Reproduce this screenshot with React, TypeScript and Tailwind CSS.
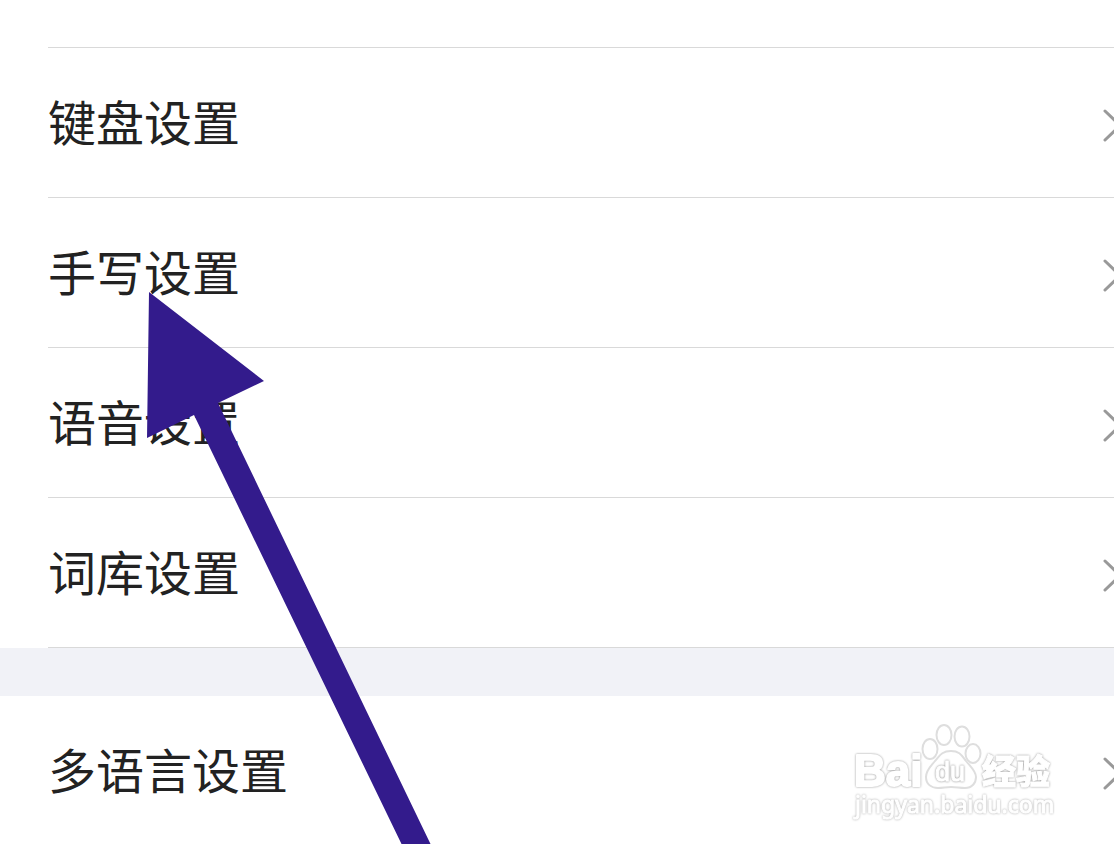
const groups = [
    ['键盘设置', '手写设置', '语音设置', '词库设置'],
    ['多语言设置'],
];

function Chevron() {
    return (
        <svg className="mt-1 -mr-2 h-[38px] w-5 shrink-0" viewBox="0 0 20 38" fill="none" stroke="#999" strokeWidth="3" strokeLinecap="round" aria-hidden="true">
            <path d="M3 5 18 19.5 3 34" />
        </svg>
    )
}

function SettingRow({ label }: { label: string }) {
    return (
        <li className="ml-12 border-b border-[#d9d9d9]">
            <button type="button" className="flex h-[149px] w-full items-center justify-between overflow-hidden text-left">
                <span className="pb-1.5 text-[48px] leading-[70px]">{label}</span>
                <Chevron />
            </button>
        </li>
    )
}

function Pointer() {
    return (
        <svg className="pointer-events-none absolute top-[292px] left-[147px] h-[552px] w-[284px]" viewBox="147 292 284 552" aria-hidden="true">
            <path d="M149 292 264 381 218 403 431 845 402 845 194 415 147 438Z" fill="#331b8c" />
        </svg>
    )
}

function Watermark() {
    return (
        <svg className="pointer-events-none absolute top-[720px] right-[54px] h-[104px] w-[210px]" viewBox="850 720 210 104" fill="#fff" stroke="#fff" strokeWidth="2" strokeLinejoin="round">
            <g className="[filter:drop-shadow(0_0_1px_#999)]">
                <text x="854" y="786" fontFamily="Liberation Sans" fontWeight="700" fontSize="44">Bai</text>
                <text x="982" y="784" fontFamily="Noto Sans CJK SC" fontWeight="900" fontSize="34" strokeWidth="1">经验</text>
            </g>
            <text className="[filter:drop-shadow(0_0_1px_#aaa)]" x="855" y="813" fontFamily="Noto Sans, sans-serif" fontSize="23" strokeWidth="1">jingyan.baidu.com</text>
            <g stroke="#dedede">
                <ellipse cx="930" cy="749" rx="7.5" ry="10" />
                <ellipse cx="944" cy="735" rx="7.5" ry="10" />
                <ellipse cx="962" cy="736.5" rx="7.5" ry="10" />
                <ellipse cx="973" cy="753.5" rx="7.5" ry="9.5" />
                <path d="M951 751C941 751 939 757 935 761C931 766 926 770 926 777C926 784 931 788 938 788C943 788 946 787 951 787C956 787 960 788 965 788C972 788 976 783 976 777C976 771 970 766 966 761C962 756 960 751 951 751Z" />
            </g>
            <text className="[filter:drop-shadow(0_0_1px_#888)]" x="935" y="781" fontFamily="Liberation Sans" fontSize="27" strokeWidth="1">du</text>
        </svg>
    )
}

export default function App() {
    return (
        <main className="relative min-h-screen overflow-hidden bg-white font-['Noto_Sans_CJK_SC',sans-serif] text-[#222]">
            <div className="ml-12 h-12 border-b border-[#d9d9d9]"></div>
            <div className="flex flex-col gap-12 bg-[#f1f2f7]">
                {groups.map((labels, i) => (
                    <ul key={i} className="bg-white">
                        {labels.map((label) => <SettingRow key={label} label={label} />)}
                    </ul>
                ))}
            </div>
            <Pointer />
            <Watermark />
        </main>
    )
}
